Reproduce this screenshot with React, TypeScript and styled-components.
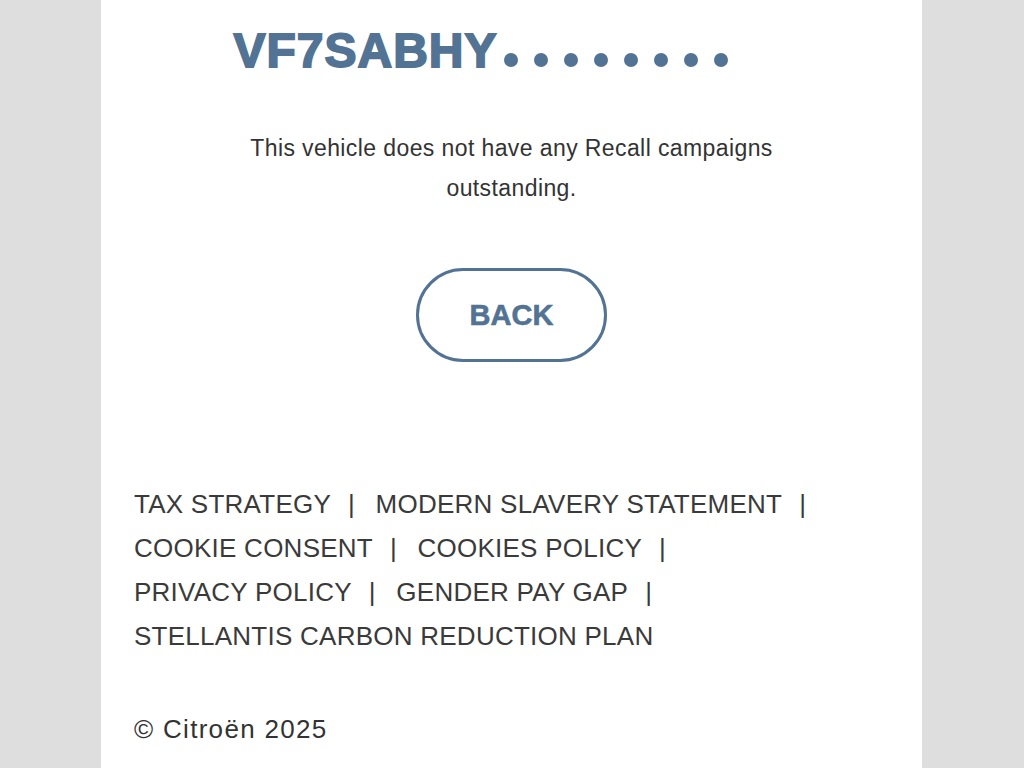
import React from "react";
import styled, { createGlobalStyle } from "styled-components";

const GlobalStyle = createGlobalStyle`
  html, body {
    margin: 0;
    padding: 0;
    background: #dedede;
  }
  * {
    box-sizing: border-box;
  }
`;

const links = [
  "TAX STRATEGY",
  "MODERN SLAVERY STATEMENT",
  "COOKIE CONSENT",
  "COOKIES POLICY",
  "PRIVACY POLICY",
  "GENDER PAY GAP",
  "STELLANTIS CARBON REDUCTION PLAN",
];

const App = () => {
  return (
    <>
      <GlobalStyle />
      <Page>
        <Panel>
          <Vin>
            VF7SABHY
            <Dots>
              {Array.from({ length: 8 }).map((_, i) => (
                <Dot key={i} />
              ))}
            </Dots>
          </Vin>
          <Message>
            This vehicle does not have any Recall campaigns
            <br />
            outstanding.
          </Message>
          <BackButton>BACK</BackButton>
          <Footer>
            <Links>
              {links.map((l, i) => (
                <React.Fragment key={l}>
                  <LinkItem>
                    <Link href="#">{l}</Link>
                    {i < links.length - 1 && <Sep>|</Sep>}
                  </LinkItem>{" "}
                </React.Fragment>
              ))}
            </Links>
            <Copyright>© Citroën 2025</Copyright>
          </Footer>
        </Panel>
      </Page>
    </>
  );
};

const Page = styled.div`
  display: flex;
  justify-content: center;
  min-height: 768px;
  padding-left: 101px;
  padding-right: 102px;
`;

const Panel = styled.div`
  width: 821px;
  background: #ffffff;
  display: flex;
  flex-direction: column;
  align-items: center;
  padding-top: 26px;
`;

const Vin = styled.div`
  display: flex;
  align-items: flex-end;
  font-family: "Liberation Sans", Arial, sans-serif;
  font-weight: 700;
  font-size: 48px;
  line-height: 50px;
  letter-spacing: 1px;
  color: #537394;
  -webkit-text-stroke: 1.8px #537394;
  margin-left: -62px;
`;

const Dots = styled.span`
  display: flex;
  gap: 16px;
  margin-left: 6px;
  padding-bottom: 9px;
`;

const Dot = styled.span`
  width: 14px;
  height: 14px;
  border-radius: 50%;
  background: #537394;
`;

const Message = styled.p`
  margin: 52px 0 0;
  font-family: "Liberation Sans", Arial, sans-serif;
  font-size: 23px;
  letter-spacing: 0.4px;
  line-height: 40px;
  color: #333333;
  text-align: center;
`;

const BackButton = styled.button`
  margin-top: 60px;
  width: 191px;
  height: 94px;
  border: 3px solid #537394;
  border-radius: 47px;
  background: #ffffff;
  color: #537394;
  font-family: "Liberation Sans", Arial, sans-serif;
  font-weight: 700;
  font-size: 29px;
  -webkit-text-stroke: 0.6px #537394;
  cursor: pointer;
`;

const Footer = styled.div`
  align-self: stretch;
  padding: 0 33px;
  margin-top: 120px;
`;

const Links = styled.div`
  width: 700px;
  font-family: "Liberation Sans", Arial, sans-serif;
  font-size: 26px;
  letter-spacing: 0.25px;
  line-height: 44px;
`;

const LinkItem = styled.span`
  white-space: nowrap;
`;

const Link = styled.a`
  color: #3a3a3a;
  text-decoration: none;
`;

const Sep = styled.span`
  color: #3a3a3a;
  margin: 0 13px 0 17px;
`;

const Copyright = styled.div`
  margin-top: 51px;
  font-family: "Liberation Sans", Arial, sans-serif;
  font-size: 26px;
  letter-spacing: 1.3px;
  line-height: 40px;
  color: #333333;
`;

export default App;
